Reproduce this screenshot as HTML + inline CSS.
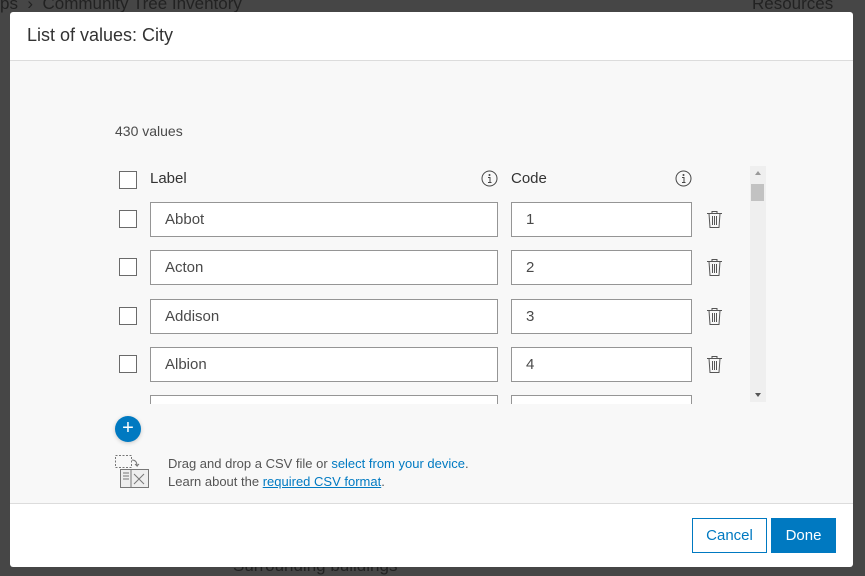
<!DOCTYPE html>
<html><head><style>
*{box-sizing:border-box;margin:0;padding:0}
body{width:865px;height:572px;background:#464646;font-family:"Liberation Sans",sans-serif;position:relative;overflow:hidden;color:#4a4a4a}
.bg{position:absolute;color:#222;font-size:17px}
.modal{position:absolute;left:10px;top:12px;width:843px;height:555px;background:#fff;border-radius:3px;overflow:hidden}
.hd{height:49px;border-bottom:1px solid #dcdcdc;padding:13px 17px;font-size:18px;color:#333}
.body{position:absolute;top:49px;left:0;right:0;height:443px;background:#f8f8f8;border-bottom:1px solid #dcdcdc}
.abs{position:absolute}
.cb{position:absolute;width:18px;height:18px;border:1px solid #6a6a6a;background:#fff}
.in{position:absolute;height:35px;border:1px solid #959595;background:#fff;font-size:15px;padding:8px 14px;color:#4a4a4a}
.list{position:absolute;left:0;top:0;width:760px;height:354px;overflow:hidden}
a{color:#007ac2;text-decoration:none}
.btn{position:absolute;top:506px;height:35px;font-size:15px;text-align:center;line-height:34px}
</style></head><body>
<div class="bg" style="left:0;top:-6px">ps &nbsp;›&nbsp; Community Tree Inventory</div>
<div class="bg" style="left:752px;top:-6px">Resources</div>
<div class="bg" style="left:233px;top:556px">Surrounding buildings</div>
<div class="modal">
<div class="hd">List of values: City</div>
<div class="body">
<div class="abs" style="left:105px;top:62px;font-size:14px">430 values</div>
<div class="list" style="top:100px">
<div class="cb" style="left:109px;top:10px"></div>
<div class="abs" style="left:140px;top:9px;font-size:15px;color:#333">Label</div>
<svg class="abs" style="left:471px;top:9px" width="17" height="17"><circle cx="8.5" cy="8.5" r="7.5" fill="none" stroke="#444"/><circle cx="8.5" cy="5" r="1" fill="#444"/><path d="M7 7.5h2v5M7 12.5h3.5" stroke="#444" fill="none"/></svg>
<div class="abs" style="left:501px;top:9px;font-size:15px;color:#333">Code</div>
<svg class="abs" style="left:665px;top:9px" width="17" height="17"><circle cx="8.5" cy="8.5" r="7.5" fill="none" stroke="#444"/><circle cx="8.5" cy="5" r="1" fill="#444"/><path d="M7 7.5h2v5M7 12.5h3.5" stroke="#444" fill="none"/></svg>
</div>
<div class="list" style="top:141px;height:202px">
<div style="position:absolute;top:0;left:0;width:760px">
<div class="cb" style="left:109px;top:8px"></div><div class="in" style="left:140px;top:0;width:348px">Abbot</div><div class="in" style="left:501px;top:0;width:181px">1</div>
<svg class="abs" style="left:696px;top:8px" width="17" height="19"><path d="M1 3.5h15M6 3.5V1.5h5v2M3 3.5l1 14h9l1-14M6.5 6v9M8.5 6v9M10.5 6v9" fill="none" stroke="#555"/></svg>
<div class="cb" style="left:109px;top:56px"></div><div class="in" style="left:140px;top:48px;width:348px">Acton</div><div class="in" style="left:501px;top:48px;width:181px">2</div>
<svg class="abs" style="left:696px;top:56px" width="17" height="19"><path d="M1 3.5h15M6 3.5V1.5h5v2M3 3.5l1 14h9l1-14M6.5 6v9M8.5 6v9M10.5 6v9" fill="none" stroke="#555"/></svg>
<div class="cb" style="left:109px;top:105px"></div><div class="in" style="left:140px;top:97px;width:348px">Addison</div><div class="in" style="left:501px;top:97px;width:181px">3</div>
<svg class="abs" style="left:696px;top:105px" width="17" height="19"><path d="M1 3.5h15M6 3.5V1.5h5v2M3 3.5l1 14h9l1-14M6.5 6v9M8.5 6v9M10.5 6v9" fill="none" stroke="#555"/></svg>
<div class="cb" style="left:109px;top:153px"></div><div class="in" style="left:140px;top:145px;width:348px">Albion</div><div class="in" style="left:501px;top:145px;width:181px">4</div>
<svg class="abs" style="left:696px;top:153px" width="17" height="19"><path d="M1 3.5h15M6 3.5V1.5h5v2M3 3.5l1 14h9l1-14M6.5 6v9M8.5 6v9M10.5 6v9" fill="none" stroke="#555"/></svg>
<div class="in" style="left:140px;top:193px;width:348px"></div><div class="in" style="left:501px;top:193px;width:181px"></div>
</div></div>
<div class="abs" style="left:740px;top:105px;width:16px;height:236px;background:#efefef">
<div style="position:absolute;left:5px;top:5px;border:3px solid transparent;border-bottom:4px solid #999;border-top:0"></div>
<div style="position:absolute;left:1px;top:18px;width:13px;height:17px;background:#c2c2c2"></div>
<div style="position:absolute;left:5px;bottom:5px;border:3px solid transparent;border-top:4px solid #555;border-bottom:0"></div>
</div>
<div class="abs" style="left:105px;top:355px;width:26px;height:26px;border-radius:50%;background:#0079c1;box-shadow:0 1px 4px rgba(0,0,0,.2);color:#fff;font-size:20px;line-height:25px;text-align:center">+</div>
<svg class="abs" style="left:104px;top:393px" width="36" height="36"><rect x="1.5" y="1.5" width="16" height="12" fill="none" stroke="#777" stroke-dasharray="2 1.5"/><path d="M18 6q5 0 5 6l-2-2M23 12l2-2" fill="none" stroke="#777"/><rect x="6.5" y="15.5" width="28" height="18" fill="#eee" stroke="#777"/><path d="M9 19h6M9 22h6M9 25h6M17 15v19M20 20l10 10M30 20L20 30" stroke="#777"/></svg>
<div class="abs" style="left:158px;top:394px;font-size:13px;line-height:18px;color:#555">Drag and drop a CSV file or <a>select from your device</a>.<br>Learn about the <a style="text-decoration:underline">required CSV format</a>.</div>
</div>
<div class="btn" style="left:682px;width:75px;border:1px solid #0079c1;color:#0079c1;background:#fff">Cancel</div>
<div class="btn" style="left:761px;width:65px;background:#0079c1;color:#fff;line-height:35px">Done</div>
</div>
</body></html>
